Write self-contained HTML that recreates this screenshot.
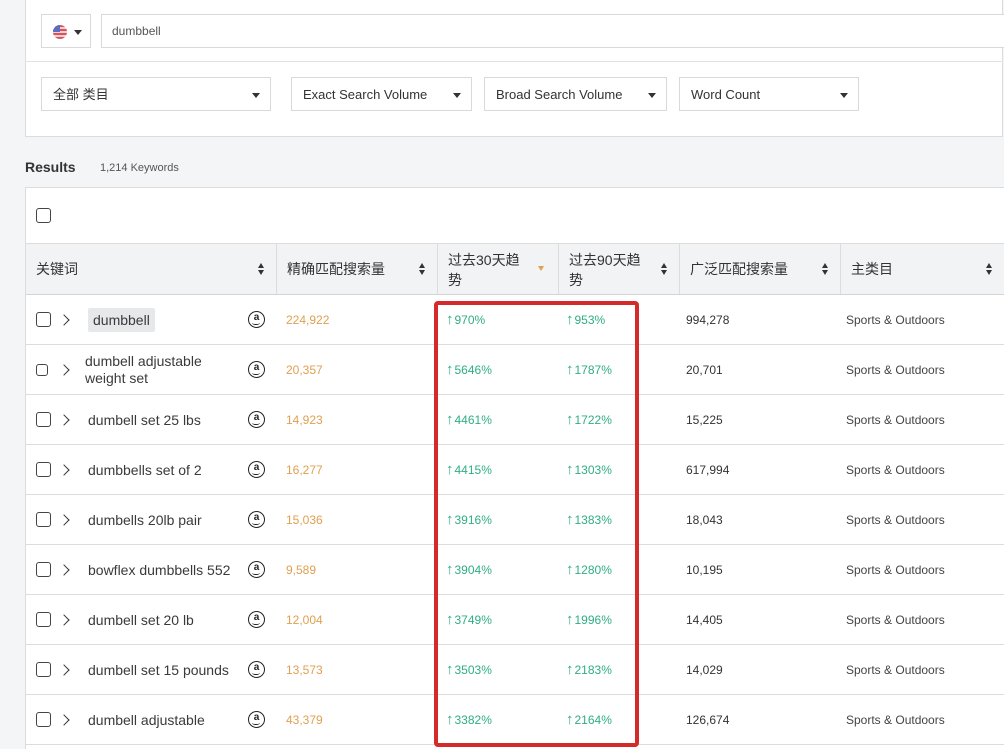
<!DOCTYPE html>
<html><head><meta charset="utf-8"><style>
*{margin:0;padding:0;box-sizing:border-box}
body{width:1004px;height:749px;background:#f4f5f7;position:relative;overflow:hidden;font-family:"Liberation Sans","Noto Sans CJK SC",sans-serif;color:#333}
.a{position:absolute}
.panel{left:25px;top:-2px;width:978px;height:139px;background:#fff;border:1px solid #dcdcdc}
.box{border:1px solid #d9d9d9;background:#fff;height:34px}
.dd{font-size:13px;color:#333;line-height:34px;padding-left:11px}
.car{position:absolute;right:10px;top:15px;width:0;height:0;border-left:4px solid transparent;border-right:4px solid transparent;border-top:5px solid #333}
.tbl{left:25px;top:187px;width:979px;height:562px;background:#fff;border-top:1px solid #dcdcdc;border-left:1px solid #dcdcdc}
.hdr{left:26px;top:243px;width:978px;height:52px;background:#f2f3f5;border-top:1px solid #dcdcdc;border-bottom:1px solid #d4d4d4}
.hc{position:absolute;top:0;height:50px;border-right:1px solid #dcdcdc;font-size:14px;color:#333}
.sort{position:absolute;right:12px;top:19px;width:6px;height:12px}
.sort:before{content:"";position:absolute;left:0;top:0;border-left:3px solid transparent;border-right:3px solid transparent;border-bottom:5px solid #333}
.sort:after{content:"";position:absolute;left:0;top:7px;border-left:3px solid transparent;border-right:3px solid transparent;border-top:5px solid #333}
.row{position:absolute;left:26px;width:978px;height:50px;border-bottom:1px solid #dcdcdc;font-size:12px}
.cb{position:absolute;left:10px;top:17px;width:15px;height:15px;border:1.5px solid #444;border-radius:3px}
.chev{position:absolute;left:34px;top:21px;width:8px;height:8px;border-right:1.8px solid #333;border-top:1.8px solid #333;transform:rotate(45deg)}
.kw{position:absolute;left:62px;top:0;line-height:50px;font-size:14px;color:#3a3a3a}
.amz{position:absolute;left:222px;top:16px;width:17px;height:17px;border:1.5px solid #222;border-radius:50%;font-size:10px;font-weight:bold;text-align:center;line-height:11px;color:#222}
.amz:after{content:"";position:absolute;left:3px;bottom:2px;width:8px;height:3px;border-bottom:1.3px solid #222;border-radius:0 0 50% 50%}
.ex{position:absolute;left:260px;line-height:50px;color:#e0a050}
.t{position:absolute;line-height:50px;color:#2fae83}
.t b{font-weight:bold;font-size:15px;margin-right:1px}
.br{position:absolute;left:660px;line-height:50px;color:#333}
.ct{position:absolute;left:820px;line-height:50px;color:#444;font-size:12px}
</style></head><body>
<div class="a panel"></div>
<div class="a" style="left:25px;top:61px;width:978px;border-top:1px solid #e2e2e2"></div>
<div class="a box" style="left:41px;top:14px;width:50px"><div class="a" style="left:11px;top:10px;width:14px;height:14px;border-radius:50%;background:repeating-linear-gradient(#d9535b 0 2px,#f0d0d4 2px 4px)"><div style="width:7px;height:7px;background:#5a6fbf;border-radius:7px 0 0 0"></div></div><div class="car" style="right:8px"></div></div>
<div class="a box" style="left:101px;top:14px;width:910px;font-size:12px;color:#555;line-height:32px;padding-left:10px">dumbbell</div>
<div class="a box dd" style="left:41px;top:77px;width:230px">全部 类目<div class="car"></div></div>
<div class="a box dd" style="left:291px;top:77px;width:181px">Exact Search Volume<div class="car"></div></div>
<div class="a box dd" style="left:484px;top:77px;width:183px">Broad Search Volume<div class="car"></div></div>
<div class="a box dd" style="left:679px;top:77px;width:180px">Word Count<div class="car"></div></div>
<div class="a" style="left:25px;top:159px;font-size:14px;font-weight:bold;color:#333">Results</div>
<div class="a" style="left:100px;top:162px;font-size:11px;color:#555">1,214 Keywords</div>
<div class="a tbl"></div>
<div class="a" style="left:36px;top:208px;width:15px;height:15px;border:1.5px solid #444;border-radius:3px"></div>
<div class="a hdr">
<div class="hc" style="left:0;width:251px;line-height:50px;padding-left:10px">关键词<div class="sort"></div></div>
<div class="hc" style="left:251px;width:161px;line-height:50px;padding-left:10px">精确匹配搜索量<div class="sort"></div></div>
<div class="hc" style="left:412px;width:121px;padding:6px 0 0 10px;line-height:20px">过去30天趋<br>势<div style="position:absolute;right:14px;top:22px;border-left:3px solid transparent;border-right:3px solid transparent;border-top:5px solid #e0a050"></div></div>
<div class="hc" style="left:533px;width:121px;padding:6px 0 0 10px;line-height:20px">过去90天趋<br>势<div class="sort"></div></div>
<div class="hc" style="left:654px;width:161px;line-height:50px;padding-left:10px">广泛匹配搜索量<div class="sort"></div></div>
<div class="hc" style="left:815px;width:163px;line-height:50px;padding-left:10px;border-right:none">主类目<div class="sort"></div></div>
</div>

<div class="row" style="top:295px"><div class="cb"></div><div class="chev"></div><div class="kw"><span style="background:#e6e8ea;padding:4px 5px;border-radius:2px">dumbbell</span></div><div class="amz">a</div><div class="ex">224,922</div><div class="t" style="left:420px"><b>↑</b>970%</div><div class="t" style="left:540px"><b>↑</b>953%</div><div class="br">994,278</div><div class="ct">Sports &amp; Outdoors</div></div>
<div class="row" style="top:345px"><div class="cb" style="width:12px;height:12px;top:19px"></div><div class="chev"></div><div class="kw" style="left:59px;line-height:17px;top:8px">dumbell adjustable<br>weight set</div><div class="amz">a</div><div class="ex">20,357</div><div class="t" style="left:420px"><b>↑</b>5646%</div><div class="t" style="left:540px"><b>↑</b>1787%</div><div class="br">20,701</div><div class="ct">Sports &amp; Outdoors</div></div>
<div class="row" style="top:395px"><div class="cb"></div><div class="chev"></div><div class="kw">dumbell set 25 lbs</div><div class="amz">a</div><div class="ex">14,923</div><div class="t" style="left:420px"><b>↑</b>4461%</div><div class="t" style="left:540px"><b>↑</b>1722%</div><div class="br">15,225</div><div class="ct">Sports &amp; Outdoors</div></div>
<div class="row" style="top:445px"><div class="cb"></div><div class="chev"></div><div class="kw">dumbbells set of 2</div><div class="amz">a</div><div class="ex">16,277</div><div class="t" style="left:420px"><b>↑</b>4415%</div><div class="t" style="left:540px"><b>↑</b>1303%</div><div class="br">617,994</div><div class="ct">Sports &amp; Outdoors</div></div>
<div class="row" style="top:495px"><div class="cb"></div><div class="chev"></div><div class="kw">dumbells 20lb pair</div><div class="amz">a</div><div class="ex">15,036</div><div class="t" style="left:420px"><b>↑</b>3916%</div><div class="t" style="left:540px"><b>↑</b>1383%</div><div class="br">18,043</div><div class="ct">Sports &amp; Outdoors</div></div>
<div class="row" style="top:545px"><div class="cb"></div><div class="chev"></div><div class="kw">bowflex dumbbells 552</div><div class="amz">a</div><div class="ex">9,589</div><div class="t" style="left:420px"><b>↑</b>3904%</div><div class="t" style="left:540px"><b>↑</b>1280%</div><div class="br">10,195</div><div class="ct">Sports &amp; Outdoors</div></div>
<div class="row" style="top:595px"><div class="cb"></div><div class="chev"></div><div class="kw">dumbell set 20 lb</div><div class="amz">a</div><div class="ex">12,004</div><div class="t" style="left:420px"><b>↑</b>3749%</div><div class="t" style="left:540px"><b>↑</b>1996%</div><div class="br">14,405</div><div class="ct">Sports &amp; Outdoors</div></div>
<div class="row" style="top:645px"><div class="cb"></div><div class="chev"></div><div class="kw">dumbell set 15 pounds</div><div class="amz">a</div><div class="ex">13,573</div><div class="t" style="left:420px"><b>↑</b>3503%</div><div class="t" style="left:540px"><b>↑</b>2183%</div><div class="br">14,029</div><div class="ct">Sports &amp; Outdoors</div></div>
<div class="row" style="top:695px"><div class="cb"></div><div class="chev"></div><div class="kw">dumbell adjustable</div><div class="amz">a</div><div class="ex">43,379</div><div class="t" style="left:420px"><b>↑</b>3382%</div><div class="t" style="left:540px"><b>↑</b>2164%</div><div class="br">126,674</div><div class="ct">Sports &amp; Outdoors</div></div>

<div class="a" style="left:434px;top:301px;width:205px;height:446px;border:4px solid #d42a2a;border-radius:4px"></div>
</body></html>
